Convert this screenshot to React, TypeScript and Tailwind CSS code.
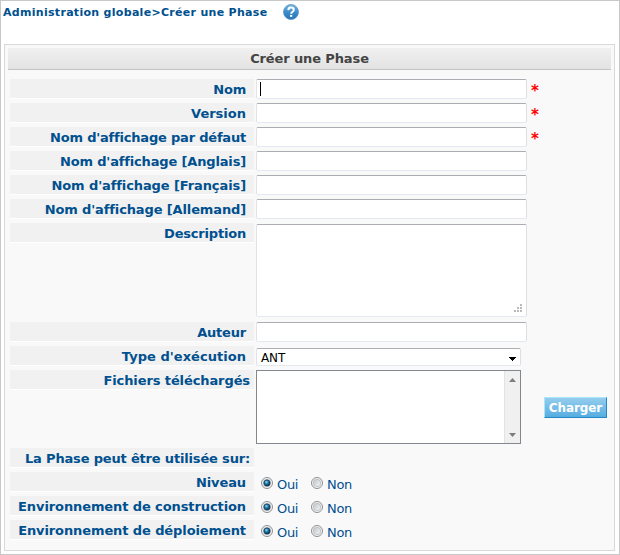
import type { ReactNode } from "react";

const fieldBorder =
  "rounded-[2px] border border-t-[#abadb3] border-r-[#dbdfe6] border-b-[#e3e9ef] border-l-[#e2e3ea] bg-white";

function Row({
  label,
  spacing = "tracking-[-0.2px]",
  flush = false,
  height = "h-6",
  children,
}: {
  label: string;
  spacing?: string;
  flush?: boolean;
  height?: string;
  children?: ReactNode;
}) {
  return (
    <div className={`flex shrink-0 items-start ${height}`}>
      <div
        className={`mr-[2px] h-5 w-[244px] shrink-0 border-b border-white bg-[#f1f1f1] text-right text-[13px] leading-[22px] font-bold whitespace-nowrap text-[#00508f] ${flush ? "pr-1" : "pr-2"}`}
      >
        <span className={spacing}>{label}</span>
      </div>
      {children}
    </div>
  );
}

function TextBox({ required = false, caret = false }: { required?: boolean; caret?: boolean }) {
  return (
    <>
      <div className={`flex h-5 w-[271px] items-center pl-[3px] ${fieldBorder}`}>
        {caret && <span className="h-[14px] w-px bg-black" />}
      </div>
      {required && <span className="ml-[4px] text-[15px] leading-[24px] font-bold text-[#ff0000]">*</span>}
    </>
  );
}

function Radio({ checked = false }: { checked?: boolean }) {
  return (
    <svg className="mt-[5px] shrink-0" width="12" height="12" viewBox="0 0 12 12">
      <defs>
        <radialGradient id="dot" cx="0.4" cy="0.35" r="0.65">
          <stop offset="0" stopColor="#8fe3fb" />
          <stop offset="0.4" stopColor="#2587b5" />
          <stop offset="1" stopColor="#07263f" />
        </radialGradient>
        <linearGradient id="well" x1="0" y1="0" x2="1" y2="1">
          <stop offset="0" stopColor="#bfc3c7" />
          <stop offset="1" stopColor="#f7f7f7" />
        </linearGradient>
      </defs>
      <circle cx="6" cy="6" r="5.5" fill="#f8f8f8" stroke="#8b8f93" />
      <circle cx="6" cy="6" r="3.8" fill="url(#well)" stroke="#b5b9bd" strokeWidth="0.8" />
      {checked && <circle cx="6" cy="6" r="3.1" fill="url(#dot)" stroke="#13324b" strokeWidth="0.7" />}
    </svg>
  );
}

function YesNo() {
  return (
    <div className="flex pl-[5px] text-[13px] leading-[26px] text-[#00508f]">
      <Radio checked />
      <span className="ml-1 w-[34px] tracking-[-0.3px]">Oui</span>
      <Radio />
      <span className="ml-1 tracking-[-0.3px]">Non</span>
    </div>
  );
}

function HelpIcon() {
  return (
    <svg className="mt-[3px] ml-[15px]" width="16" height="16" viewBox="0 0 16 16">
      <defs>
        <linearGradient id="help" x1="0" y1="0" x2="0" y2="1">
          <stop offset="0" stopColor="#7ab8e4" />
          <stop offset="0.5" stopColor="#3c8dcb" />
          <stop offset="1" stopColor="#2673b6" />
        </linearGradient>
      </defs>
      <circle cx="8" cy="8" r="7.5" fill="url(#help)" stroke="#5b94c2" strokeWidth="0.8" />
      <path d="M5.3 6.1C5.4 4.3 6.5 3.6 8 3.6C9.7 3.6 10.8 4.5 10.8 5.9C10.8 7.7 8.2 7.7 8.2 9.7" fill="none" stroke="#fff" strokeWidth="2" />
      <rect x="7.1" y="10.9" width="2.1" height="2" fill="#fff" />
    </svg>
  );
}

export default function App() {
  return (
    <div className="h-[555px] w-[620px] overflow-hidden border border-[#c8c8c8] bg-white font-['DejaVu_Sans',Verdana,sans-serif]">
      <div className="flex h-[43px] items-start pl-[2px]">
        <div className="mt-1 w-[265px] text-[11px] leading-4 font-bold whitespace-nowrap text-[#00508f]">
          <span className="tracking-[0.3px]">Administration globale&gt;Créer une Phase</span>
        </div>
        <HelpIcon />
      </div>
      <div className="ml-[3px] flex h-[507px] w-[611px] flex-col border border-[#d9d9d9] bg-[#f9f9f9] px-[3px] pt-[3px]">
        <div className="mb-[9px] h-[22px] shrink-0 border-b border-[#c4c4c4] bg-linear-to-b from-[#f0f0f0] to-[#e3e3e3] text-center text-[13px] leading-[21px] font-bold text-[#444]">
          <span className="tracking-[-0.12px]">Créer une Phase</span>
        </div>
        <div className="flex flex-col pl-[2px]">
          <Row label="Nom">
            <TextBox required caret />
          </Row>
          <Row label="Version" spacing="tracking-[0px]">
            <TextBox required />
          </Row>
          <Row label="Nom d'affichage par défaut">
            <TextBox required />
          </Row>
          <Row label="Nom d'affichage [Anglais]" spacing="tracking-[-0.16px]">
            <TextBox />
          </Row>
          <Row label="Nom d'affichage [Français]" spacing="tracking-[-0.1px]">
            <TextBox />
          </Row>
          <Row label="Nom d'affichage [Allemand]" spacing="tracking-[-0.13px]">
            <TextBox />
          </Row>
          <Row label="Description" height="h-[99px]">
            <div className={`mt-px flex h-[93px] w-[271px] items-end justify-end pr-[4px] pb-[4px] ${fieldBorder}`}>
              <svg width="8" height="8" viewBox="0 0 8 8" fill="#bbb">
                <path d="M6 0h2v2h-2zM3 3h2v2h-2zM6 3h2v2h-2zM0 6h2v2h-2zM3 6h2v2h-2zM6 6h2v2h-2z" />
              </svg>
            </div>
          </Row>
          <Row label="Auteur">
            <TextBox />
          </Row>
          <Row label="Type d'exécution" spacing="tracking-[0.04px]">
            <div className={`mt-[2px] flex h-[18px] w-[265px] items-center justify-between pr-1 pl-1 text-[12px] leading-4 text-black ${fieldBorder}`}>
              <span className="mt-px tracking-[-0.1px]">ANT</span>
              <svg className="mt-[3px]" width="7" height="4" viewBox="0 0 7 4" shapeRendering="crispEdges">
                <path d="M0 0h7v1h-1v1h-1v1h-1v1h-1v-1h-1v-1h-1v-1h-1z" />
              </svg>
            </div>
          </Row>
          <Row label="Fichiers téléchargés" flush height="h-[78px]" spacing="tracking-[-0.1px]">
            <div className="flex h-[74px] w-[265px] justify-end border border-[#828790] bg-white">
              <div className="flex w-4 flex-col items-center justify-between border-l border-[#e3e3e3] bg-[#f0f0f0] pt-[7px] pb-[6px]">
                <svg width="7" height="4" viewBox="0 0 7 4" fill="#7d7d7d">
                  <path d="M3.5 0L7 4H0z" />
                </svg>
                <svg width="7" height="4" viewBox="0 0 7 4" fill="#7d7d7d">
                  <path d="M0 0H7L3.5 4z" />
                </svg>
              </div>
            </div>
            <button className="mt-[27px] ml-[23px] flex h-[21px] w-[63px] justify-center border border-t-[#a9e6f8] border-r-[#2487c7] border-b-[#2487c7] border-l-[#a9e6f8] bg-linear-to-b from-[#94cdee] to-[#55ade0] text-[12px] leading-[21px] font-bold text-white">
              <span className="tracking-[-0.1px]">Charger</span>
            </button>
          </Row>
          <Row label="La Phase peut être utilisée sur:" flush spacing="tracking-[-0.17px]" />
          <Row label="Niveau" spacing="tracking-[-0.1px]">
            <YesNo />
          </Row>
          <Row label="Environnement de construction" spacing="tracking-[-0.1px]">
            <YesNo />
          </Row>
          <Row label="Environnement de déploiement" spacing="tracking-[-0.1px]">
            <YesNo />
          </Row>
        </div>
      </div>
    </div>
  );
}
